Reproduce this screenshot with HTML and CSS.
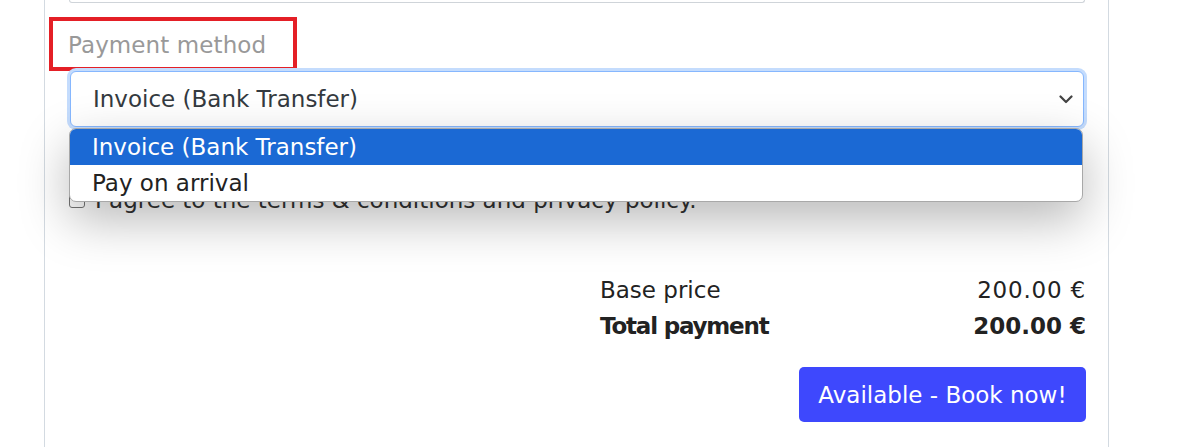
FILE: index.html
```html
<!DOCTYPE html>
<html lang="en">

<head>
    <meta charset="UTF-8">
    <meta name="viewport" content="width=device-width, initial-scale=1.0">
    <title>Booking</title>
    <link rel="stylesheet" href="styles.css">
</head>

<body>
    <div class="card">
        <div class="field-stub"></div>

        <div class="field-label">Payment method</div>

        <div class="select-wrap">
            <div class="select">
                <span>Invoice (Bank Transfer)</span>
                <svg class="chevron" width="14" height="9" viewBox="0 0 14 9">
                    <path d="M1.5 1.5 L7 7 L12.5 1.5" fill="none" stroke="#444" stroke-width="2.2" stroke-linecap="round" stroke-linejoin="round"/>
                </svg>
            </div>
            <div class="dropdown">
                <div class="option selected">Invoice (Bank Transfer)</div>
                <div class="option">Pay on arrival</div>
            </div>
        </div>

        <div class="terms">
            <span class="checkbox"></span>
            <span>I agree to the terms &amp; conditions and privacy policy.</span>
        </div>

        <div class="totals">
            <div class="row">
                <span>Base price</span>
                <span class="amount">200.00 €</span>
            </div>
            <div class="row total">
                <span class="label">Total payment</span>
                <span>200.00 €</span>
            </div>
        </div>

        <div class="actions">
            <button type="button" class="book">Available - Book now!</button>
        </div>
    </div>
</body>

</html>
```

FILE: styles.css
```css
body {
    margin: 0;
    background: #fff;
    font-family: "DejaVu Sans", sans-serif;
    font-size: 23px;
    color: #222;
}

.card {
    margin-left: 44px;
    width: 1065px;
    min-height: 447px;
    box-sizing: border-box;
    border-left: 1px solid #d3dae1;
    border-right: 1px solid #d3dae1;
    padding: 0 22px 0 23px;
}

.card .field-stub {
    height: 2px;
    margin: 0 1px;
    border: 1px solid #cfd4d9;
    border-top: none;
    border-radius: 0 0 8px 8px;
}

.card .field-label {
    margin: 14px 0 0 -19px;
    width: 248px;
    height: 54px;
    box-sizing: border-box;
    border: 4px solid #e41f26;
    padding: 2px 0 0 15px;
    line-height: 44px;
    color: #999;
    letter-spacing: 0.1px;
}

.select-wrap {
    position: relative;
    margin: 0 2px;
}

.select {
    display: flex;
    align-items: center;
    justify-content: space-between;
    height: 56px;
    box-sizing: border-box;
    padding: 0 10px 0 22px;
    border: 1px solid #86b7fe;
    border-radius: 6px;
    box-shadow: 0 0 0 3px #c4dcfd;
    color: #343a40;
    background: #fff;
}

.dropdown {
    position: absolute;
    top: 57px;
    left: -1px;
    right: 1px;
    background: #fff;
    border: 1px solid #a8a8a8;
    border-radius: 7px;
    overflow: hidden;
    box-shadow: 0 18px 50px rgba(0, 0, 0, 0.28);
    z-index: 2;
}

.dropdown .option {
    height: 36px;
    line-height: 36px;
    padding-left: 22px;
    color: #222;
}

.dropdown .option.selected {
    background: #1b69d4;
    color: #fff;
}

.terms {
    display: flex;
    align-items: center;
    gap: 10px;
    margin-top: 58px;
    height: 30px;
    color: #333;
}

.terms .checkbox {
    width: 16px;
    height: 16px;
    margin-left: 1px;
    box-sizing: border-box;
    border: 1px solid #767676;
    border-radius: 3px;
}

.totals {
    width: 486px;
    margin: 57px 0 0 auto;
}

.totals .row {
    display: flex;
    justify-content: space-between;
    line-height: 36px;
}

.totals .amount {
    letter-spacing: 0.8px;
}

.totals .row.total {
    font-weight: bold;
}

.totals .row.total .label {
    letter-spacing: -1.2px;
}

.actions {
    display: flex;
    justify-content: flex-end;
    margin-top: 23px;
}

.book {
    width: 287px;
    height: 55px;
    border: none;
    border-radius: 5px;
    background: #3e48fd;
    color: #fff;
    font-family: inherit;
    font-size: 23px;
}
```
